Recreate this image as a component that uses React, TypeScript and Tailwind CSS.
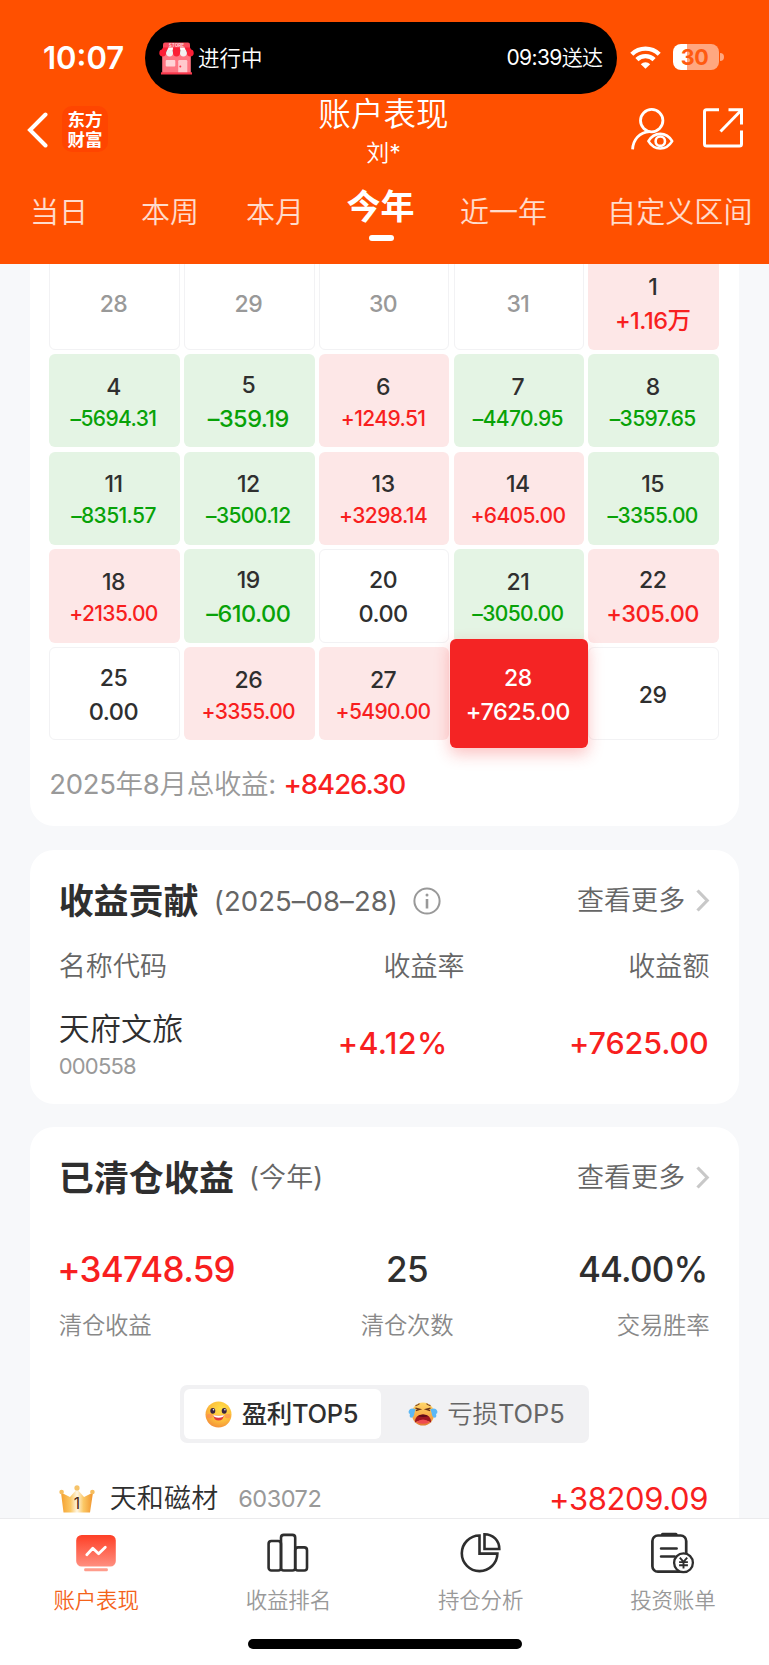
import type { ReactNode } from "react";

const MEDIUM = "font-['Inter','Noto_Sans_CJK_SC',sans-serif] font-medium";
const BOLD = "font-['Inter','Noto_Sans_CJK_SC',sans-serif] font-bold";

type Tone = "up" | "down" | "flat" | "muted" | "active";
type Day = { day: string; amount?: string; tone: Tone };

const days: Day[] = [
  { day: "28", tone: "muted" },
  { day: "29", tone: "muted" },
  { day: "30", tone: "muted" },
  { day: "31", tone: "muted" },
  { day: "1", amount: "+1.16万", tone: "up" },
  { day: "4", amount: "–5694.31", tone: "down" },
  { day: "5", amount: "–359.19", tone: "down" },
  { day: "6", amount: "+1249.51", tone: "up" },
  { day: "7", amount: "–4470.95", tone: "down" },
  { day: "8", amount: "–3597.65", tone: "down" },
  { day: "11", amount: "–8351.57", tone: "down" },
  { day: "12", amount: "–3500.12", tone: "down" },
  { day: "13", amount: "+3298.14", tone: "up" },
  { day: "14", amount: "+6405.00", tone: "up" },
  { day: "15", amount: "–3355.00", tone: "down" },
  { day: "18", amount: "+2135.00", tone: "up" },
  { day: "19", amount: "–610.00", tone: "down" },
  { day: "20", amount: "0.00", tone: "flat" },
  { day: "21", amount: "–3050.00", tone: "down" },
  { day: "22", amount: "+305.00", tone: "up" },
  { day: "25", amount: "0.00", tone: "flat" },
  { day: "26", amount: "+3355.00", tone: "up" },
  { day: "27", amount: "+5490.00", tone: "up" },
  { day: "28", amount: "+7625.00", tone: "active" },
  { day: "29", tone: "flat" },
];

const cellTone: Record<Tone, string> = {
  up: "bg-[#fde7e7]",
  down: "bg-[#e4f4e4]",
  flat: "border border-[#f2f2f4] bg-white",
  muted: "border border-[#f2f2f4] bg-white",
  active: "",
};

const amountTone: Record<Tone, string> = {
  up: "text-[#f81f1f]",
  down: "text-[#08a208]",
  flat: "text-[#2f2f2f]",
  muted: "text-[#999]",
  active: "text-white",
};

function DayCell({ day, amount, tone }: Day) {
  const dayColor = tone === "active" ? "text-white" : tone === "muted" ? "text-[#999]" : "text-[#2f2f2f]";
  if (!amount) {
    return (
      <div className={`flex items-center justify-center rounded-[6px] pr-[2px] pt-[1.5px] text-[23px] leading-6 tracking-[-0.5px] ${MEDIUM} ${cellTone[tone]} ${dayColor}`}>
        {day}
      </div>
    );
  }
  const small = amount.length > 7 && tone !== "active";
  const pad = tone === "flat" ? "pt-[17.5px]" : small ? "pt-[20.5px]" : "pt-[18.5px]";
  return (
    <div className={`relative flex flex-col items-center rounded-[6px] pr-[2px] ${MEDIUM} ${pad} ${cellTone[tone]}`}>
      {tone === "active" && (
        <div className="absolute -inset-x-1 -inset-y-2 rounded-[6px] bg-[#f42424] shadow-[0_6px_16px_rgba(244,36,36,0.28)]" />
      )}
      <span className={`relative text-[23px] leading-6 tracking-[-0.5px] ${dayColor}`}>{day}</span>
      <span
        className={`relative whitespace-nowrap leading-6 ${amountTone[tone]} ${
          small ? "mt-[8px] text-[21px] tracking-[-0.62px]" : "mt-[10px] text-[23.5px] tracking-[-0.5px]"
        }`}
      >
        {amount}
      </span>
    </div>
  );
}

function WifiIcon() {
  return (
    <svg className="h-[23px] w-[31px]" viewBox="0 0 31 23" fill="none" stroke="#fff" strokeWidth="4.4">
      <path d="M1.8 8.2a19.6 19.6 0 0 1 27.4 0" />
      <path d="M6.9 13.6a12.3 12.3 0 0 1 17.2 0" />
      <path d="M10.8 18.2a6.8 6.8 0 0 1 9.4 0l-4.7 4.6z" fill="#fff" stroke="none" />
    </svg>
  );
}

function StoreIcon() {
  return (
    <svg className="h-[33px] w-[35px]" viewBox="0 0 35 33">
      <rect x="4" y="0.5" width="27" height="8" rx="2" fill="#fb4a5c" />
      <text x="17.5" y="5.2" fontSize="4.6" fontWeight="700" fill="#ffd9dc" textAnchor="middle" className="font-['Inter']">
        STORE
      </text>
      <rect x="3.2" y="11" width="28.6" height="20" fill="#ff7683" />
      <path d="M4 5.6h5l-2.4 6H.6z" fill="#fb1f36" />
      <path d="M9.5 5.6h4.6l-1 6H7z" fill="#fff" />
      <path d="M14.2 5.6h6.6l.4 6h-7.4z" fill="#fb1f36" />
      <path d="M20.9 5.6h4.6l2.5 6h-6z" fill="#fff" />
      <path d="M26 5.6h5l3.4 6h-6z" fill="#fb1f36" />
      <circle cx="3.7" cy="11" r="3.4" fill="#fb1f36" />
      <circle cx="10.6" cy="11" r="3.4" fill="#f4f1f2" />
      <circle cx="17.5" cy="11" r="3.4" fill="#fb1f36" />
      <circle cx="24.4" cy="11" r="3.4" fill="#f4f1f2" />
      <circle cx="31.3" cy="11" r="3.4" fill="#fb1f36" />
      <rect x="6.7" y="18" width="9.6" height="6.6" rx="1" fill="#ffd3d6" />
      <path d="M19.2 31V19.2q0-1.2 1.2-1.2h6.7q1.2 0 1.2 1.2V31z" fill="#ffc9cd" />
      <circle cx="21.3" cy="24.4" r="1" fill="#fb3a4d" />
      <rect x="2" y="30.3" width="31" height="2.2" fill="#f9394d" />
    </svg>
  );
}

function UserEyeIcon() {
  return (
    <svg className="h-[44px] w-[44px]" viewBox="0 0 44 44" fill="none" stroke="#fff" strokeWidth="2.8">
      <circle cx="21.7" cy="14.6" r="11.2" />
      <path d="M2.6 43.4C2.9 34 9.5 26 19.5 25.6" />
      <path d="M18.4 35.2c3-5 7.2-7.3 11.9-7.3s8.900 2.300 11.900 7.300c-3 5-7.200 7.300-11.900 7.300s-8.900-2.300-11.900-7.300z" strokeWidth="2.6" strokeLinejoin="round" />
      <circle cx="30.3" cy="35.2" r="4.7" strokeWidth="2.6" />
    </svg>
  );
}

function ShareIcon() {
  return (
    <svg className="h-[40px] w-[40px]" viewBox="0 0 40 40" fill="none" stroke="#fff" strokeWidth="3">
      <path d="M16 1.8H3.500Q1.500 1.800 1.500 3.800v32.200q0 2 2 2h33q2 0 2-2V22.500" />
      <path d="M25.500 1.800h13v14.700" />
      <path d="M38 2.500 17.500 23.500" />
    </svg>
  );
}

function Chevron() {
  return (
    <svg className="h-[23px] w-[14px]" viewBox="0 0 14 23" fill="none" stroke="#c8c8c8" strokeWidth="3.2">
      <path d="M1.5 1.500 11.200 11.500 1.500 21.500" />
    </svg>
  );
}

function InfoIcon() {
  return (
    <svg className="h-[28px] w-[28px]" viewBox="0 0 28 28" fill="none" stroke="#999" strokeWidth="2">
      <circle cx="14" cy="14" r="12.6" />
      <path d="M14 12v9.5" strokeWidth="2.6" />
      <circle cx="14" cy="8" r="1.5" fill="#999" stroke="none" />
    </svg>
  );
}

function SmileIcon() {
  return (
    <svg className="h-[27px] w-[27px]" viewBox="0 0 27 27">
      <defs>
        <radialGradient id="smile-face" cx="0.6" cy="0.3" r="0.8">
          <stop offset="0" stopColor="#ffe04a" />
          <stop offset="0.55" stopColor="#fdbf3c" />
          <stop offset="1" stopColor="#f2853a" />
        </radialGradient>
      </defs>
      <circle cx="13.5" cy="13.5" r="13" fill="url(#smile-face)" />
      <ellipse cx="4.8" cy="15" rx="3" ry="2.2" fill="#ff7c5c" opacity="0.5" />
      <ellipse cx="22.6" cy="15" rx="3" ry="2.2" fill="#ff7c5c" opacity="0.5" />
      <ellipse cx="7.8" cy="9.8" rx="2.5" ry="2.9" fill="#3a2440" />
      <ellipse cx="19.2" cy="9.8" rx="2.5" ry="2.9" fill="#3a2440" />
      <circle cx="8.5" cy="8.8" r="0.8" fill="#fff" />
      <circle cx="19.9" cy="8.8" r="0.8" fill="#fff" />
      <path d="M8.300 14q5.400 1.600 10.600 0-.5 5.500-5.300 5.500T8.300 14z" fill="#e3383c" />
      <path d="M8.300 14q5.400 1.600 10.600 0-.2 2.700-5.300 2.800-4.900-.1-5.300-2.800z" fill="#fff" />
    </svg>
  );
}

function CryIcon() {
  return (
    <svg className="h-[24px] w-[30px]" viewBox="0 0 30 24">
      <defs>
        <linearGradient id="cry-face" x1="0" y1="0" x2="0" y2="1">
          <stop offset="0" stopColor="#ffd76a" />
          <stop offset="0.6" stopColor="#f8ab45" />
          <stop offset="1" stopColor="#e07a32" />
        </linearGradient>
      </defs>
      <ellipse cx="15" cy="12" rx="11.2" ry="11.5" fill="url(#cry-face)" />
      <path d="M7.500 3.600q2.500-.5 4-2M22.500 3.600q-2.500-.5-4-2" stroke="#7c4320" strokeWidth="1.2" fill="none" />
      <path d="M7.500 6.200l4.200 1.200-3.800 1.200M22.500 6.200l-4.200 1.200 3.800 1.200" stroke="#6b3518" strokeWidth="1.4" fill="none" />
      <path d="M6.800 20.500Q7 12.800 15 12.600q8 .2 8.200 7.900-2.500-2.100-8.200-2.100t-8.200 2.100z" fill="#9c1620" />
      <path d="M9.500 14.300q2.300-1.700 5.500-1.700t5.500 1.700q-2.500.8-5.500.8t-5.500-.8z" fill="#5f0d18" />
      <path d="M8.500 20.200q2.800-2.800 6.500-2.800t6.500 2.800q-3 1.600-6.500 1.600t-6.500-1.600z" fill="#ee4b50" />
      <path d="M7.600 7.200Q2 4.800.6 9.400q-.3 2.400 1.400 2.600-1 3 1 3.800Q6 15.500 6.400 11z" fill="#5cb8f5" />
      <path d="M22.400 7.200q5.600-2.400 7 2.200.3 2.400-1.400 2.600 1 3-1 3.800-3-.3-3.400-4.800z" fill="#5cb8f5" />
    </svg>
  );
}

function CrownIcon() {
  return (
    <svg className="h-[28px] w-[36px]" viewBox="0 0 36 28">
      <defs>
        <linearGradient id="crown-body" x1="0" y1="0" x2="1" y2="0">
          <stop offset="0" stopColor="#f5a02f" />
          <stop offset="0.3" stopColor="#fbc866" />
          <stop offset="0.5" stopColor="#fff6e2" />
          <stop offset="0.7" stopColor="#fbc866" />
          <stop offset="1" stopColor="#f1942c" />
        </linearGradient>
      </defs>
      <path d="M2 7.500l9 4.500 7-8 7 8 9-4.500-3 20H4.500z" fill="url(#crown-body)" />
      <circle cx="2.6" cy="7" r="2.3" fill="#f6bd5e" />
      <circle cx="18" cy="2.9" r="2.6" fill="#f6c36a" />
      <circle cx="33.4" cy="7" r="2.3" fill="#f6bd5e" />
      <text x="17.8" y="23.600" fontSize="15.500" fill="#4a2410" textAnchor="middle" className="font-['Inter']">
        1
      </text>
    </svg>
  );
}

function AccountIcon() {
  return (
    <svg className="h-[42px] w-[44px]" viewBox="0 0 44 42">
      <defs>
        <linearGradient id="account-tile" x1="0" y1="0" x2="0" y2="1">
          <stop offset="0" stopColor="#fe3f26" />
          <stop offset="1" stopColor="#ff8f80" />
        </linearGradient>
      </defs>
      <rect x="2.2" y="3" width="39.6" height="31.5" rx="5.5" fill="url(#account-tile)" />
      <rect x="10.2" y="36.2" width="23.6" height="3" rx="1" fill="#ff9c8c" />
      <path d="M12.800 22.800 18.800 16.300l5.800 5.400 6.700-6.500" fill="none" stroke="#fff" strokeWidth="2.8" strokeLinecap="round" strokeLinejoin="round" />
    </svg>
  );
}

function RankIcon() {
  return (
    <svg className="h-[42px] w-[44px]" viewBox="0 0 44 42" fill="none" stroke="#2e2e2e" strokeWidth="2.6">
      <rect x="2.600" y="9" width="12.400" height="29.500" rx="2.800" />
      <rect x="15" y="2.900" width="14.200" height="35.600" rx="2.800" />
      <rect x="29.200" y="15.400" width="11.800" height="23.100" rx="2.800" />
    </svg>
  );
}

function PieIcon() {
  return (
    <svg className="h-[42px] w-[44px]" viewBox="0 0 44 42" fill="none" stroke="#2e2e2e" strokeWidth="2.600">
      <path d="M20.500 3.500a17.800 17.800 0 1 0 17.900 18.100H20.500z" />
      <path d="M25.500 2.200V17h14.800C40.300 8.500 34 2.200 25.500 2.200z" />
    </svg>
  );
}

function BillIcon() {
  return (
    <svg className="h-[42px] w-[44px]" viewBox="0 0 44 42" fill="none" stroke="#2e2e2e" strokeWidth="2.700">
      <rect x="1.400" y="3.500" width="33.800" height="36.200" rx="5.500" />
      <path d="M11.500 2.400h13.500" strokeWidth="3.200" strokeLinecap="round" />
      <path d="M10.100 16.500h15.500M10.100 24.500h13.500" strokeLinecap="round" />
      <circle cx="32.500" cy="30.800" r="9.400" fill="#fff" strokeWidth="2.300" />
      <path d="M28.800 25.600l3.700 4.300 3.700-4.300M32.500 29.900v6.500M28.100 30.100h8.800M28.100 33.300h8.800" strokeWidth="1.900" />
    </svg>
  );
}

function More() {
  return (
    <div className="-mr-[0.8px] flex items-center">
      <span className="text-[27px] leading-8 tracking-[0.1px] text-[#666]">查看更多</span>
      <span className="ml-[11px] flex">
        <Chevron />
      </span>
    </div>
  );
}

const navItems: { label: string; icon: ReactNode; active?: boolean }[] = [
  { label: "账户表现", icon: <AccountIcon />, active: true },
  { label: "收益排名", icon: <RankIcon /> },
  { label: "持仓分析", icon: <PieIcon /> },
  { label: "投资账单", icon: <BillIcon /> },
];

export default function App() {
  return (
    <div className="flex h-[1665px] w-[769px] flex-col overflow-hidden bg-[#f7f8fa] font-['Inter','Noto_Sans_CJK_SC_DemiLight','Noto_Sans_CJK_SC',sans-serif] text-[#2f2f2f]">
      <header className="h-[264px] shrink-0 bg-[#ff5000] text-white">
        <div className="flex h-[94px] items-start pt-[22px]">
          <div className="w-[145px] pl-[43px] pt-[18px] text-[31px] font-semibold leading-9">10:07</div>
          <div className="flex h-[72px] w-[472px] items-center rounded-full bg-black pl-[14px] pr-[14.5px]">
            <StoreIcon />
            <span className="ml-[4px] text-[21.5px] leading-7">进行中</span>
            <span className="ml-auto text-[21px] leading-7 tracking-[-0.6px]">09:39送达</span>
          </div>
          <div className="ml-[13px] mt-[23.5px]">
            <WifiIcon />
          </div>
          <div className="ml-[11.5px] mt-[22px] flex h-[26px] w-[46px] items-center justify-center rounded-[8px] bg-[linear-gradient(90deg,#fff_14px,#ffa780_14px)] pr-[2px] text-[21.5px] font-bold leading-6 tracking-[-0.4px] text-[#ff5a10]">
            30
          </div>
          <div className="ml-[1.5px] mt-[31px] h-[8px] w-[3.5px] rounded-r-full bg-[#ffa780]" />
        </div>

        <div className="flex h-[86px] items-start">
          <div className="flex w-[200px] pl-[26px] pt-[12px]">
            <svg className="mt-[6px] h-[36px] w-[24px]" viewBox="0 0 24 36" fill="none" stroke="#fff" strokeWidth="4">
              <path d="M19.500 2.500 4 18l15.500 15.500" strokeLinecap="round" strokeLinejoin="miter" />
            </svg>
            <div className="ml-[12px] flex h-[46px] w-[46px] flex-col items-center justify-center rounded-[10px] bg-[#ff4500] font-['Noto_Sans_CJK_SC'] text-[17.5px] font-bold leading-[20px]">
              <span>东方</span>
              <span>财富</span>
            </div>
          </div>
          <div className="flex flex-1 flex-col items-center pr-[2px] pt-[3.5px]">
            <h1 className="text-[32.5px] leading-[34px] tracking-[0.1px]">账户表现</h1>
            <p className="mt-[7.5px] text-[23px] leading-[28px]">刘*</p>
          </div>
          <div className="flex w-[200px] pl-[61px] pt-[12px]">
            <UserEyeIcon />
            <span className="ml-[29px] mt-[2px]">
              <ShareIcon />
            </span>
          </div>
        </div>

        <nav className="flex items-center whitespace-nowrap pt-[2.5px] text-[29px] leading-[60px] text-white/80">
          <span className="ml-[30px]">当日</span>
          <span className="ml-[53px]">本周</span>
          <span className="ml-[47px]">本月</span>
          <span className={`relative -mt-[11px] ml-[42.5px] text-[34px] text-white ${BOLD}`}>
            今年
            <i className="absolute left-[22px] top-[58px] h-[6px] w-[25px] rounded-full bg-white" />
          </span>
          <span className="ml-[45.5px]">近一年</span>
          <span className="ml-[60px] tracking-[0.1px]">自定义区间</span>
        </nav>
      </header>

      <main className="flex flex-1 flex-col overflow-hidden pl-[29.7px] pr-[30.5px]">
        <section className="-mt-[7.7px] h-[570px] shrink-0 rounded-b-[24px] bg-white pl-[19.5px] pr-[19.5px]">
          <div className="grid auto-rows-[93.4px] grid-cols-5 gap-x-[4.2px] gap-y-[4.3px]">
            {days.map((d, i) => (
              <DayCell key={i} {...d} />
            ))}
          </div>
          <p className="mt-[26px] flex items-center whitespace-nowrap leading-9">
            <span className="text-[27.5px] tracking-[-0.3px] text-[#999]">2025年8月总收益:</span>
            <span className={`ml-[7.5px] text-[27.5px] tracking-[-1px] text-[#f81f1f] ${MEDIUM}`}>+8426.30</span>
          </p>
        </section>

        <section className="mt-[23.2px] h-[254px] shrink-0 rounded-[24px] bg-white px-[29px] pt-[31px]">
          <div className="flex h-10 items-center">
            <h2 className={`text-[35px] leading-10 tracking-[-0.1px] ${BOLD}`}>收益贡献</h2>
            <span className="ml-[15.5px] text-[27.5px] leading-10 tracking-[0.07px] text-[#666]">(2025–08–28)</span>
            <span className="ml-[15px]">
              <InfoIcon />
            </span>
            <span className="ml-auto">
              <More />
            </span>
          </div>
          <div className="mt-[28px] flex text-[27px] leading-[36px] tracking-[0.1px] text-[#666]">
            <span className="w-[205px]">名称代码</span>
            <span className="w-[201px] text-right">收益率</span>
            <span className="flex-1 text-right">收益额</span>
          </div>
          <div className="mt-[23.5px] flex">
            <div className="w-[205px]">
              <p className="text-[31px] leading-[42px] tracking-[0.2px]">天府文旅</p>
              <p className="mt-[2px] text-[22px] leading-[28px] tracking-[-0.8px] text-[#999]">000558</p>
            </div>
            <p className={`w-[184px] pt-[15px] text-right text-[30.5px] leading-[40px] tracking-[0.38px] text-[#f81f1f] ${MEDIUM}`}>+4.12%</p>
            <p className={`flex-1 pr-[0.8px] pt-[15px] text-right text-[30.5px] leading-[40px] tracking-[-0.1px] text-[#f81f1f] ${MEDIUM}`}>+7625.00</p>
          </div>
        </section>

        <section className="mt-[23.5px] h-[500px] shrink-0 rounded-t-[24px] bg-white px-[29px] pt-[30.5px]">
          <div className="flex h-10 items-center">
            <h2 className={`text-[35px] leading-10 tracking-[0.07px] ${BOLD}`}>已清仓收益</h2>
            <span className="ml-[15px] text-[27px] leading-10 tracking-[0.15px] text-[#666]">(今年)</span>
            <span className="ml-auto">
              <More />
            </span>
          </div>
          <div className="mt-[49.5px] flex items-start justify-between">
            <div className="w-[200px]">
              <p className={`-ml-[1.5px] text-[35px] leading-[44px] tracking-[-0.7px] text-[#f81f1f] ${MEDIUM}`}>+34748.59</p>
              <p className="mt-[17.5px] text-[23.4px] leading-[34px] tracking-[-0.2px] text-[#888]">清仓收益</p>
            </div>
            <div className="ml-[46px] w-[200px] text-center">
              <p className={`text-[35px] leading-[44px] tracking-[-0.6px] ${MEDIUM}`}>25</p>
              <p className="mt-[17.5px] text-[23.4px] leading-[34px] tracking-[-0.2px] text-[#888]">清仓次数</p>
            </div>
            <div className="w-[200px] text-right">
              <p className={`pr-[2px] text-[35px] leading-[44px] tracking-[-0.8px] ${MEDIUM}`}>44.00%</p>
              <p className="mt-[17.5px] text-[23.4px] leading-[34px] tracking-[-0.2px] text-[#888]">交易胜率</p>
            </div>
          </div>
          <div className="ml-[121px] mt-[42.5px] flex h-[58px] w-[409px] rounded-[7px] bg-[#f1f1f3] p-[4px]">
            <div className="flex w-[197px] items-center rounded-[6px] bg-white pl-[21px]">
              <SmileIcon />
              <span className={`ml-[10px] text-[25.5px] leading-8 tracking-[-0.36px] ${MEDIUM}`}>盈利TOP5</span>
            </div>
            <div className="flex items-center pl-[27.5px]">
              <CryIcon />
              <span className="ml-[9px] text-[25.5px] leading-8 tracking-[-0.1px] text-[#666]">亏损TOP5</span>
            </div>
          </div>
          <div className="mt-[35.5px] flex h-10 items-center">
            <span className="flex">
              <CrownIcon />
            </span>
            <span className="ml-[15px] text-[27px] leading-8 tracking-[0.15px]">天和磁材</span>
            <span className="ml-[20px] text-[23.5px] leading-8 tracking-[-0.5px] text-[#999]">603072</span>
            <span className="ml-auto pr-[1.5px] text-[31px] leading-8 tracking-[-0.38px] text-[#f81f1f]">+38209.09</span>
          </div>
        </section>
      </main>

      <footer className="h-[147px] shrink-0 border-t border-[#ebebed] bg-white">
        <div className="flex h-[120px] pt-[13px]">
          {navItems.map((n) => (
            <div key={n.label} className="flex flex-1 flex-col items-center">
              {n.icon}
              <span className={`mt-[11px] text-[21.5px] leading-[30px] tracking-[-0.2px] ${n.active ? "text-[#f4631a]" : "text-[#999]"}`}>{n.label}</span>
            </div>
          ))}
        </div>
        <div className="mx-auto h-[10px] w-[274px] rounded-full bg-black" />
      </footer>
    </div>
  );
}
